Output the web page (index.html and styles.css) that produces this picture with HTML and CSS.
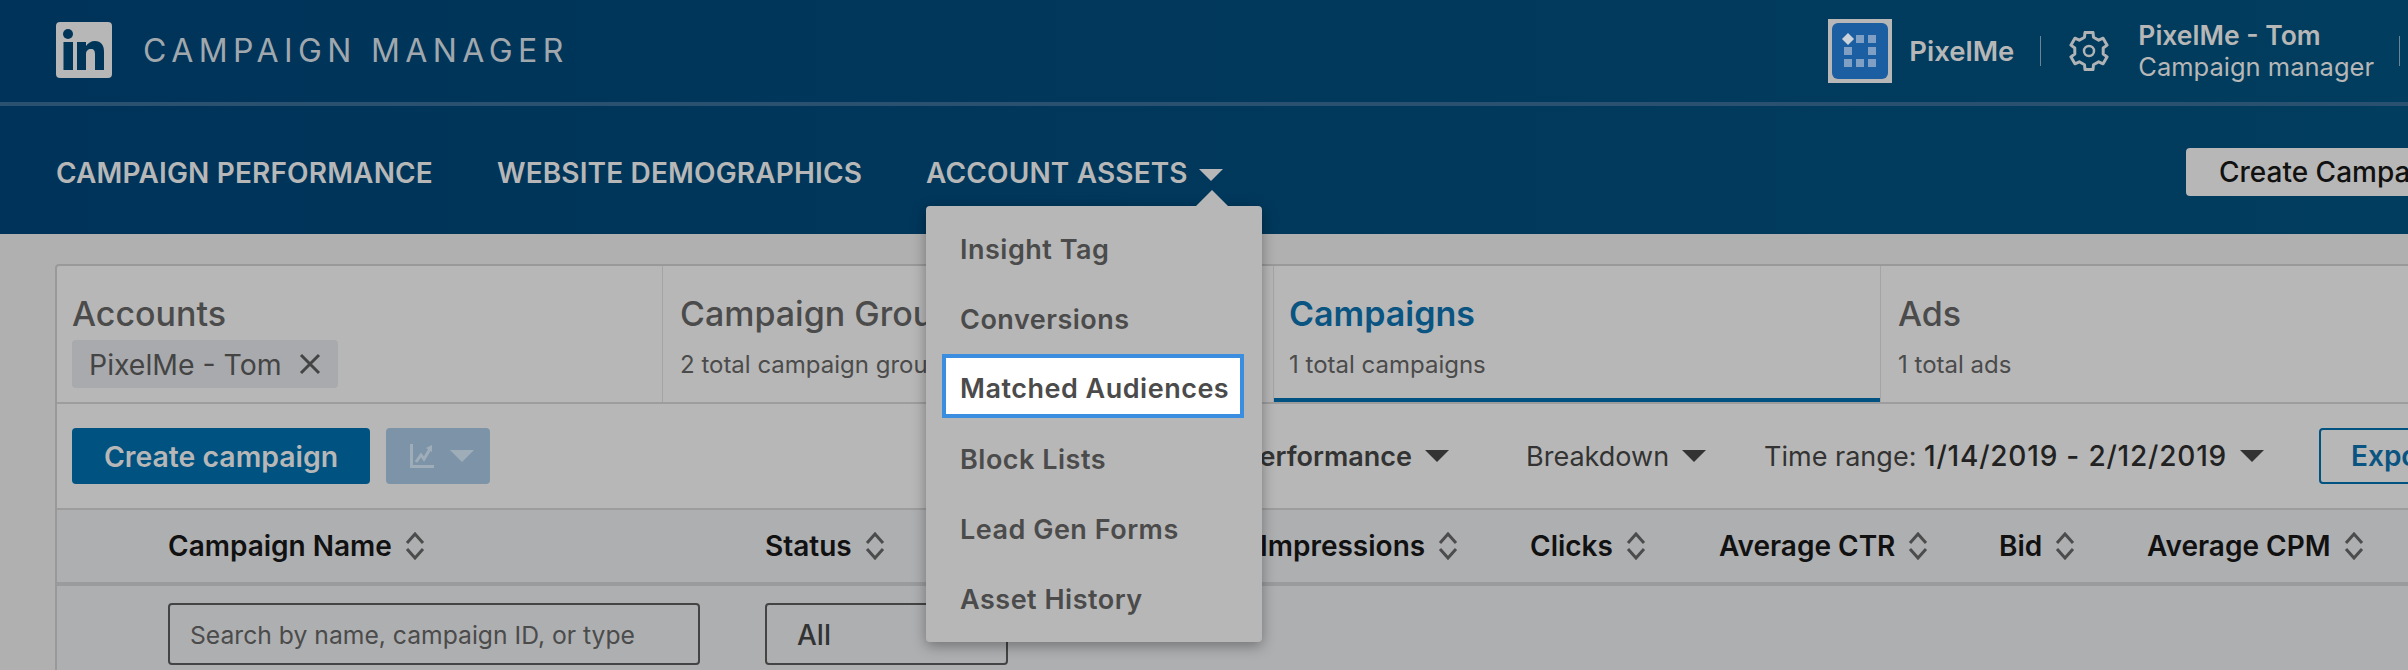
FILE: index.html
```html
<!DOCTYPE html>
<html lang="en">
<head>
<meta charset="utf-8">
<title>Campaign Manager</title>
<link rel="stylesheet" href="styles.css">
</head>
<body>
<header class="header">
  <div class="topbar">
    <svg class="li-logo" viewBox="0 0 56 56"><rect width="56" height="56" rx="4" fill="#b7b7b7"/><circle cx="12" cy="12" r="5" fill="#00355a"/><rect x="7.5" y="20" width="9.5" height="28" fill="#00355a"/><path d="M21 20h9v4c2-3 5-5 9-5 6 0 9 4 9 11v18h-9V32c0-3-1-5-4-5s-5 2-5 5v16h-9z" fill="#00355a"/></svg>
    <span class="product">CAMPAIGN MANAGER</span>
    <div class="account">
      <div class="avatar">
        <svg viewBox="0 0 64 64" class="avatar-svg"><rect width="64" height="64" fill="#b7b7b7"/><rect x="4" y="4" width="56" height="56" rx="6" fill="#1c5ea2"/><path d="M20 14l6 6-6 6-6-6z" fill="#cdd3da"/><g fill="#7f9fc4"><rect x="28" y="16" width="8" height="8"/><rect x="40" y="16" width="8" height="8"/><rect x="16" y="28" width="8" height="8"/><rect x="40" y="28" width="8" height="8"/><rect x="16" y="40" width="8" height="8"/><rect x="28" y="40" width="8" height="8"/><rect x="40" y="40" width="8" height="8"/></g></svg>
      </div>
      <span class="org">PixelMe</span>
      <span class="vrule"></span>
      <svg class="gear" viewBox="0 0 40 40"><polygon points="15.5,6.2 16,1.4 24,1.4 24.5,6.2 29.7,9.2 34.1,7.24 38.1,14.16 34.2,17 34.2,23 38.1,25.84 34.1,32.76 29.7,30.8 24.5,33.8 24,38.6 16,38.6 15.5,33.8 10.3,30.8 5.9,32.76 1.9,25.84 5.8,23 5.8,17 1.9,14.16 5.9,7.24 10.3,9.2" fill="none" stroke="#b0b3b5" stroke-width="3" stroke-linejoin="round"/><circle cx="20" cy="20" r="5" fill="none" stroke="#b0b3b5" stroke-width="2.5"/></svg>
      <div class="who">
        <span class="who-name">PixelMe - Tom</span>
        <span class="who-role">Campaign manager</span>
      </div>
      <span class="vrule vrule-last"></span>
    </div>
  </div>
  <nav class="navbar">
    <a class="nav-link">CAMPAIGN PERFORMANCE</a>
    <a class="nav-link">WEBSITE DEMOGRAPHICS</a>
    <div class="nav-menu">
      <a class="nav-link nav-link-open">ACCOUNT ASSETS<span class="nav-caret"></span></a>
      <ul class="menu">
        <li class="menu-item">Insight Tag</li>
        <li class="menu-item">Conversions</li>
        <li class="menu-item menu-item-focus">Matched Audiences</li>
        <li class="menu-item">Block Lists</li>
        <li class="menu-item">Lead Gen Forms</li>
        <li class="menu-item">Asset History</li>
      </ul>
    </div>
    <button class="create-top">Create Campaign</button>
  </nav>
</header>
<main class="content">
  <section class="card">
    <div class="tabs">
      <div class="tab">
        <div class="tab-title">Accounts</div>
        <div class="chip">PixelMe - Tom<svg class="chip-x" viewBox="0 0 22 22"><path d="M2 2l18 18M20 2L2 20" stroke="#444" stroke-width="3" fill="none"/></svg></div>
      </div>
      <div class="tab">
        <div class="tab-title">Campaign Groups</div>
        <div class="tab-sub">2 total campaign groups</div>
      </div>
      <div class="tab tab-active">
        <div class="tab-title">Campaigns</div>
        <div class="tab-sub">1 total campaigns</div>
      </div>
      <div class="tab">
        <div class="tab-title">Ads</div>
        <div class="tab-sub">1 total ads</div>
      </div>
    </div>
    <div class="toolbar">
      <button class="btn-primary">Create campaign</button>
      <button class="btn-chart"><svg class="chart-icon" viewBox="0 0 24 24"><path d="M1.5 0v22.5H24" fill="none" stroke="#9fadb9" stroke-width="3"/><path d="M6 18l5-7 3 4 6-10" fill="none" stroke="#9fadb9" stroke-width="3"/><path d="M16 4l6-3v7z" fill="#9fadb9"/></svg><span class="caret caret-chart"></span></button>
      <div class="tools">
        <span class="tool tool-strong">Performance<span class="caret"></span></span>
        <span class="tool tool-breakdown">Breakdown<span class="caret"></span></span>
        <span class="tool tool-time">Time range:&nbsp;<span class="tool-date">1/14/2019 - 2/12/2019</span><span class="caret"></span></span>
        <button class="btn-export">Export</button>
      </div>
    </div>
    <div class="table-row table-head">
      <span></span>
      <span class="th">Campaign Name<svg class="sort" viewBox="0 0 20 28"><path d="M2 11l8-9 8 9M2 17l8 9 8-9" fill="none" stroke="#4c4c4c" stroke-width="3"/></svg></span>
      <span class="th">Status<svg class="sort" viewBox="0 0 20 28"><path d="M2 11l8-9 8 9M2 17l8 9 8-9" fill="none" stroke="#4c4c4c" stroke-width="3"/></svg></span>
      <span class="th">Impressions<svg class="sort" viewBox="0 0 20 28"><path d="M2 11l8-9 8 9M2 17l8 9 8-9" fill="none" stroke="#4c4c4c" stroke-width="3"/></svg></span>
      <span class="th">Clicks<svg class="sort" viewBox="0 0 20 28"><path d="M2 11l8-9 8 9M2 17l8 9 8-9" fill="none" stroke="#4c4c4c" stroke-width="3"/></svg></span>
      <span class="th">Average CTR<svg class="sort" viewBox="0 0 20 28"><path d="M2 11l8-9 8 9M2 17l8 9 8-9" fill="none" stroke="#4c4c4c" stroke-width="3"/></svg></span>
      <span class="th">Bid<svg class="sort" viewBox="0 0 20 28"><path d="M2 11l8-9 8 9M2 17l8 9 8-9" fill="none" stroke="#4c4c4c" stroke-width="3"/></svg></span>
      <span class="th">Average CPM<svg class="sort" viewBox="0 0 20 28"><path d="M2 11l8-9 8 9M2 17l8 9 8-9" fill="none" stroke="#4c4c4c" stroke-width="3"/></svg></span>
    </div>
    <div class="table-row table-filter">
      <span></span>
      <div class="search">Search by name, campaign ID, or type</div>
      <div class="status-select">All</div>
    </div>
  </section>
</main>
</body>
</html>
```
FILE: styles.css
```css
* { box-sizing: border-box; }
html, body {
  margin: 0;
  width: 2408px;
  height: 670px;
  overflow: hidden;
  background: #b0b0b0;
  font-family: Inter, "Liberation Sans", sans-serif;
}
.header {
  background: linear-gradient(90deg, #003359, #013d5e);
  height: 234px;
}
.topbar {
  height: 106px;
  border-bottom: 4px solid #2b5170;
  padding-left: 56px;
  display: flex;
  align-items: center;
}
.li-logo { width: 56px; height: 56px; display: block; margin-bottom: 2px; flex: none; }
.product {
  margin-left: 31px;
  font-size: 32px;
  font-weight: 400;
  letter-spacing: 5.4px;
  color: #a0a8ae;
  white-space: nowrap;
  margin-bottom: 2px;
}
.account {
  margin-left: auto;
  display: flex;
  align-items: center;
  padding-right: 8px;
  color: #b7b7b7;
}
.avatar { width: 64px; height: 64px; flex: none; }
.avatar-svg { display: block; width: 64px; height: 64px; }
.org { margin-left: 17px; font-size: 27.5px; font-weight: 600; }
.vrule { width: 1px; height: 30px; background: #6d8496; margin-left: 26px; }
.gear { width: 40px; height: 40px; margin-left: 28px; flex: none; }
.who { margin-left: 29px; display: flex; flex-direction: column; }
.who-name { font-size: 26.5px; font-weight: 600; line-height: 32px; white-space: nowrap; }
.who-role { font-size: 25.5px; font-weight: 400; line-height: 32px; white-space: nowrap; }
.vrule-last { margin-left: 25px; }
.navbar {
  height: 128px;
  padding: 6px 0 0 56px;
  display: flex;
  align-items: center;
  position: relative;
}
.nav-link {
  font-size: 28px;
  font-weight: 600;
  letter-spacing: .15px;
  color: #b7b7b7;
  white-space: nowrap;
  margin-right: 64px;
  display: flex;
  align-items: center;
}
.nav-menu { position: relative; }
.nav-link-open { margin-right: 0; }
.nav-caret {
  width: 0; height: 0;
  margin-left: 11px;
  margin-top: 4px;
  border-left: 12px solid transparent;
  border-right: 12px solid transparent;
  border-top: 12px solid #b7b7b7;
}
.menu {
  list-style: none;
  margin: 0;
  position: absolute;
  left: 0;
  top: 50px;
  width: 336px;
  height: 436px;
  padding: 8px 18px 8px 16px;
  background: #b7b7b7;
  border-radius: 4px;
  box-shadow: 0 4px 14px rgba(0,0,0,.35);
  z-index: 5;
}
.menu::before {
  content: "";
  position: absolute;
  left: 270px;
  top: -16px;
  border-left: 16px solid transparent;
  border-right: 16px solid transparent;
  border-bottom: 16px solid #b7b7b7;
}
.menu-item {
  height: 70px;
  padding-left: 18px;
  display: flex;
  align-items: center;
  font-size: 27px;
  font-weight: 600;
  letter-spacing: .5px;
  color: #4b4b4b;
  white-space: nowrap;
}
.menu-item-focus {
  height: 64px;
  margin-bottom: 6px;
  padding: 4px 0 0 14px;
  background: #fff;
  border: 4px solid #3b8de0;
}
.create-top {
  position: absolute;
  left: 2186px;
  top: 42px;
  width: 300px;
  height: 48px;
  border: 0;
  border-radius: 4px;
  background: #b7b7b7;
  color: #111;
  font: 500 28px Inter, sans-serif;
  text-align: left;
  padding-left: 33px;
  white-space: nowrap;
}
.content { padding: 30px 0 0 55px; }
.card {
  width: 2440px;
  background: #b7b7b7;
  border: 2px solid #999;
  border-right: 0;
  border-bottom: 0;
  border-radius: 4px 0 0 0;
  height: 420px;
}
.tabs {
  display: grid;
  grid-template-columns: 606px 611px 607px 1fr;
  height: 138px;
  border-bottom: 2px solid #9d9d9d;
}
.tab {
  padding: 29px 15px 0;
  border-right: 1px solid #a4a4a4;
  position: relative;
}
.tab:nth-child(even) { padding-left: 17px; }
.tab-title { font-size: 34px; font-weight: 500; line-height: 38px; color: #4b4b4b; white-space: nowrap; }
.tab-active .tab-title { color: #0a5482; font-weight: 600; }
.tab-active::after {
  content: "";
  position: absolute;
  left: 0; right: 0; bottom: 0;
  height: 4px;
  background: #005280;
}
.tab-sub { margin-top: 17px; font-size: 24px; line-height: 30px; color: #4b4b4b; white-space: nowrap; }
.chip {
  margin-top: 7px;
  height: 48px;
  width: 266px;
  padding-left: 17px;
  background: #a9aaad;
  border-radius: 4px;
  display: flex;
  align-items: center;
  font-size: 28.4px;
  color: #444;
  white-space: nowrap;
}
.chip-x { width: 22px; height: 22px; margin-left: 17px; }
.toolbar {
  height: 106px;
  border-bottom: 2px solid #9d9d9d;
  padding: 24px 0 24px 15px;
  display: flex;
  align-items: center;
}
.btn-primary {
  width: 298px;
  height: 56px;
  border: 0;
  border-radius: 4px;
  background: #005280;
  color: #b7b7b7;
  font: 600 28.4px Inter, sans-serif;
  white-space: nowrap;
}
.btn-chart {
  margin-left: 16px;
  width: 104px;
  height: 56px;
  border: 0;
  border-radius: 4px;
  background: #7d94a8;
  display: flex;
  align-items: center;
  padding-left: 24px;
}
.chart-icon { width: 24px; height: 24px; display: block; }
.caret {
  display: inline-block;
  width: 0; height: 0;
  margin-left: 13px;
  border-left: 12px solid transparent;
  border-right: 12px solid transparent;
  border-top: 12px solid #333;
}
.caret-chart { border-top-color: #9fadb9; margin-left: 16px; }
.tools {
  margin-left: auto;
  display: flex;
  align-items: center;
  padding-right: 8px;
}
.tool {
  display: flex;
  align-items: center;
  font-size: 27px;
  color: #333;
  white-space: nowrap;
}
.tool-strong { font-weight: 600; margin-right: 77px; }
.tool-breakdown { margin-right: 58px; }
.tool-time { margin-right: 55px; }
.tool-date { font-size: 28px; font-weight: 500; letter-spacing: .8px; color: #222; }
.btn-export {
  width: 168px;
  height: 56px;
  background: transparent;
  border: 2px solid #005280;
  border-radius: 4px;
  color: #0a5482;
  font: 600 28px Inter, sans-serif;
  text-align: left;
  padding-left: 30px;
}
.table-row {
  display: grid;
  grid-template-columns: 111px 597px 495px 270px 189px 280px 148px 1fr;
  background: #aeafb1;
}
.table-head {
  height: 76px;
  border-bottom: 4px solid #9a9b9d;
  align-items: center;
}
.th {
  display: flex;
  align-items: center;
  font-size: 28px;
  font-weight: 600;
  color: #111;
  white-space: nowrap;
}
.sort { width: 20px; height: 28px; margin-left: 13px; flex: none; }
.table-filter { padding-top: 17px; height: 100px; }
.search {
  width: 532px;
  height: 62px;
  border: 2px solid #444;
  border-radius: 4px;
  padding: 1px 0 0 20px;
  display: flex;
  align-items: center;
  font-size: 24.7px;
  color: #4b4b4b;
  white-space: nowrap;
}
.status-select {
  width: 243px;
  height: 62px;
  border: 2px solid #444;
  border-radius: 4px;
  padding: 1px 0 0 30px;
  display: flex;
  align-items: center;
  font-size: 28px;
  font-weight: 500;
  color: #333;
}
```
